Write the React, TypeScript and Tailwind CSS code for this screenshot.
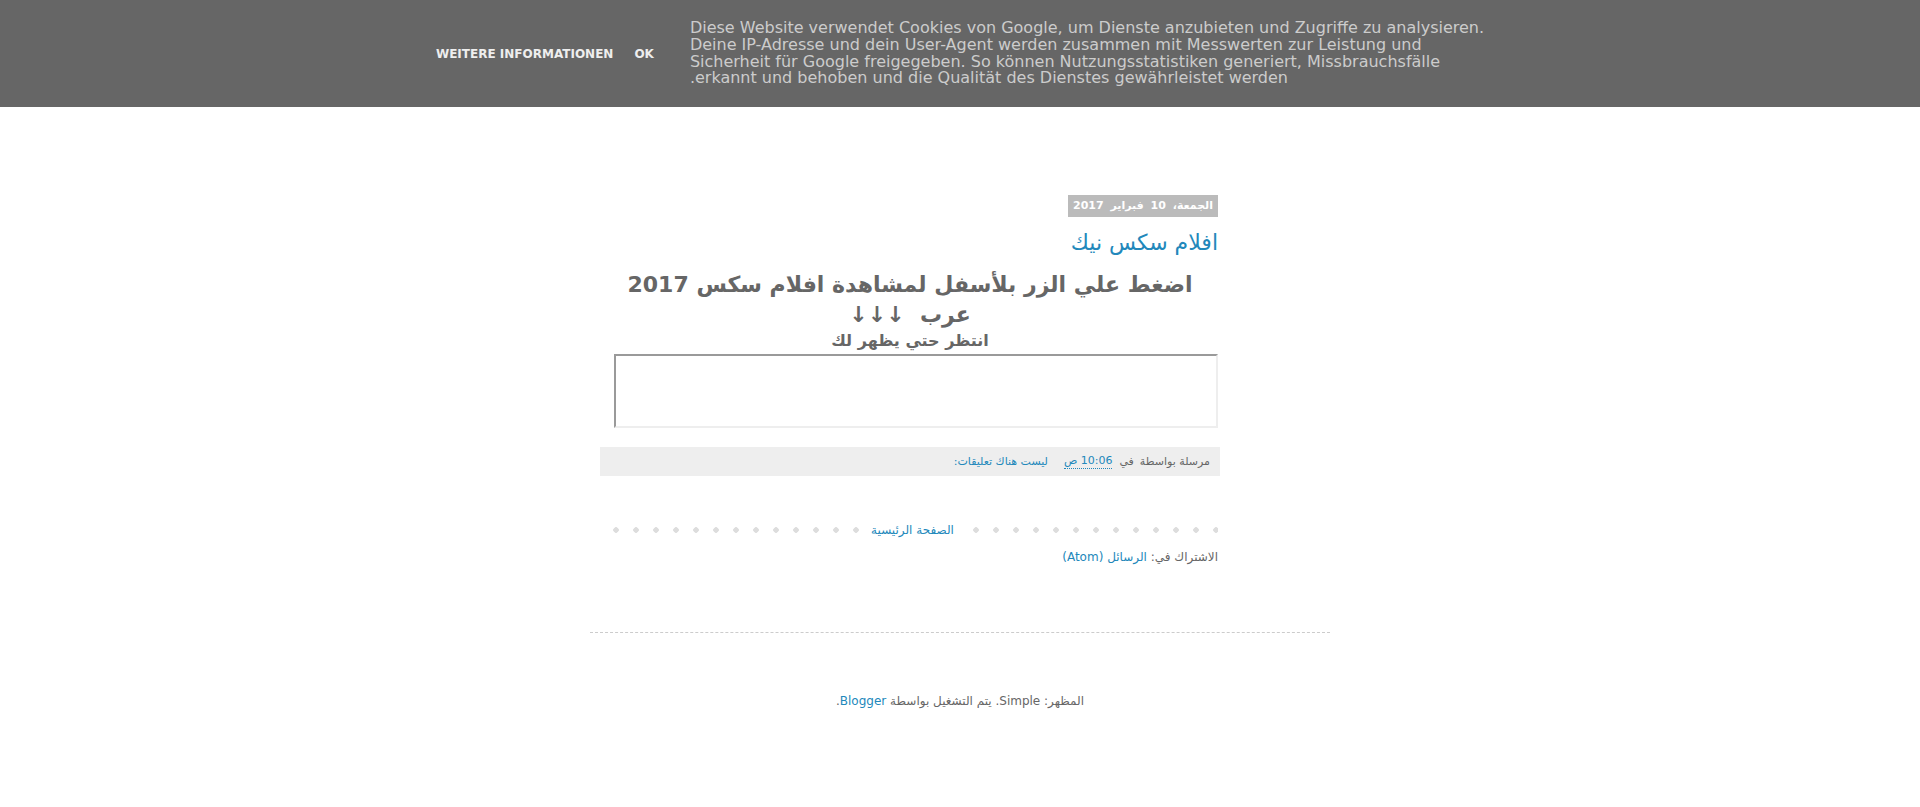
export default function App() {
  return (
    <div className="min-h-[807px] bg-white font-['DejaVu_Sans',sans-serif] text-[#666666]">
      <CookieBar />
      <div className="w-[740px] mx-auto">
        <main dir="rtl" className="ml-[12px] w-[616px]">
          <PostDate />
          <h3 className="mt-[11px] text-[22px] leading-[30px] text-[#2288bb]">افلام سكس نيك</h3>
          <PostBody />
          <PostFooter />
          <BlogPager />
          <div className="mt-[9px] h-[16px] text-[12px] leading-[16px]">
            الاشتراك في: <a className="text-[#2288bb]">الرسائل (Atom)</a>
          </div>
        </main>
        <div className="mt-[67px] border-t border-dashed border-[#cccccc]" />
        <footer dir="rtl" className="mt-[60px] h-[16px] text-center text-[12px] leading-[16px]">
          المظهر: Simple. يتم التشغيل بواسطة <a className="text-[#2288bb]">Blogger</a>.
        </footer>
      </div>
    </div>
  );
}

function CookieBar() {
  return (
    <div className="h-[107px] bg-[#666666] flex items-center justify-center">
      <div className="flex items-center">
        <a className="text-[12px] font-bold uppercase text-[#eeeeee] leading-[16px]">Weitere Informationen</a>
        <a className="ml-[21px] text-[12px] font-bold uppercase text-[#eeeeee] leading-[16px]">OK</a>
      </div>
      <div className="ml-[36px] text-left text-[16px] leading-[16.7px] text-[#cccccc] whitespace-nowrap">
        <div>Diese Website verwendet Cookies von Google, um Dienste anzubieten und Zugriffe zu analysieren.</div>
        <div>Deine IP-Adresse und dein User-Agent werden zusammen mit Messwerten zur Leistung und</div>
        <div>Sicherheit für Google freigegeben. So können Nutzungsstatistiken generiert, Missbrauchsfälle</div>
        <div dir="rtl" className="text-left">erkannt und behoben und die Qualität des Dienstes gewährleistet werden.</div>
      </div>
    </div>
  );
}

function PostDate() {
  return (
    <div className="mt-[88px] flex">
      <span className="me-[2px] bg-[#bbbbbb] px-[5px] py-[4px] text-[11px] font-bold leading-[14px] text-white [word-spacing:3px]">
        الجمعة، 10 فبراير 2017
      </span>
    </div>
  );
}

function PostBody() {
  return (
    <div className="mt-[12px]">
      <div className="text-center text-[22px] font-bold leading-[30px]">
        اضغط علي الزر بلأسفل لمشاهدة افلام سكس 2017 عرب&nbsp; ↓↓↓
      </div>
      <div className="text-center text-[16px] font-bold leading-[22px]">انتظر حتي يظهر لك</div>
      <div className="mt-[2px] flex">
        <div className="h-[74px] w-[604px] border-2 border-t-[#9a9a9a] border-l-[#9a9a9a] border-r-[#eeeeee] border-b-[#eeeeee] bg-white" />
      </div>
    </div>
  );
}

function PostFooter() {
  return (
    <div className="-mx-[2px] mt-[19px] flex h-[29px] items-center bg-[#eeeeee] px-[10px] text-[11px] leading-[14px] whitespace-nowrap">
      <span>مرسلة بواسطة</span>
      <span className="w-[6px] shrink-0" />
      <span>في</span>
      <span className="w-[7px] shrink-0" />
      <a className="text-[#2288bb] border-b border-dotted border-[#2288bb]">10:06 ص</a>
      <span className="w-[16px] shrink-0" />
      <a className="text-[#2288bb]">ليست هناك تعليقات:</a>
    </div>
  );
}

function BlogPager() {
  return (
    <div className="mt-[44px] flex h-[20px] items-center justify-center [background-image:radial-gradient(circle,#dddddd_2.5px,transparent_3px)] [background-size:20px_20px] [background-position:4px_center] bg-repeat-x">
      <span className="bg-white pl-[10px] pr-[5px] text-[12px] leading-[16px]">
        <a className="text-[#2288bb]">الصفحة الرئيسية</a>
      </span>
    </div>
  );
}
